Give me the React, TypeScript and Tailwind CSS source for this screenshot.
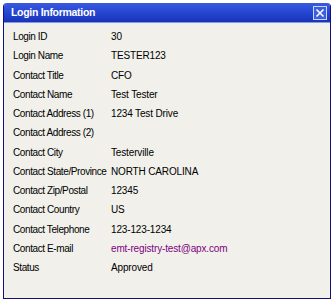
const rows: [string, string][] = [
  ['Login ID', '30'],
  ['Login Name', 'TESTER123'],
  ['Contact Title', 'CFO'],
  ['Contact Name', 'Test Tester'],
  ['Contact Address (1)', '1234 Test Drive'],
  ['Contact Address (2)', ''],
  ['Contact City', 'Testerville'],
  ['Contact State/Province', 'NORTH CAROLINA'],
  ['Contact Zip/Postal', '12345'],
  ['Contact Country', 'US'],
  ['Contact Telephone', '123-123-1234'],
  ['Contact E-mail', 'emt-registry-test@apx.com'],
  ['Status', 'Approved'],
]

export default function App() {
  return (
    <div className="w-[335px] h-[305px] bg-white p-[3px] pr-[4px] pb-[6px] font-['Liberation_Sans',Arial,sans-serif]">
      <div className="h-full flex flex-col border border-[#10107a] border-t-0 rounded-t-[4px] overflow-hidden">
        <div className="h-[20px] flex items-center justify-between pl-[7px] pr-[3px] bg-gradient-to-b from-[#3a5ae0] via-[#2446d2] to-[#1a33b8] border-b border-[#7f9ae8]">
          <span className="text-white text-[10.5px] font-bold tracking-[-0.3px]">Login Information</span>
          <button className="w-[14px] h-[14px] flex items-center justify-center border border-[#c8d4f8] bg-[#3c5ee0]">
            <svg width="10" height="10" viewBox="0 0 10 10">
              <path d="M1.5 1.5 L8.5 8.5 M8.5 1.5 L1.5 8.5" stroke="white" strokeWidth="1.6" />
            </svg>
          </button>
        </div>
        <div className="flex-1 bg-[#f1f0ea] pt-[4px] pl-[9px]">
          {rows.map(([label, value]) => (
            <div key={label} className="flex h-[19.25px] items-center text-[10px] text-black whitespace-nowrap">
              <div className="w-[98px] tracking-[-0.4px]">{label}</div>
              <div className={label === 'Contact E-mail' ? 'text-[#800080] tracking-[-0.15px]' : 'tracking-[-0.15px]'}>{value}</div>
            </div>
          ))}
        </div>
      </div>
    </div>
  )
}
